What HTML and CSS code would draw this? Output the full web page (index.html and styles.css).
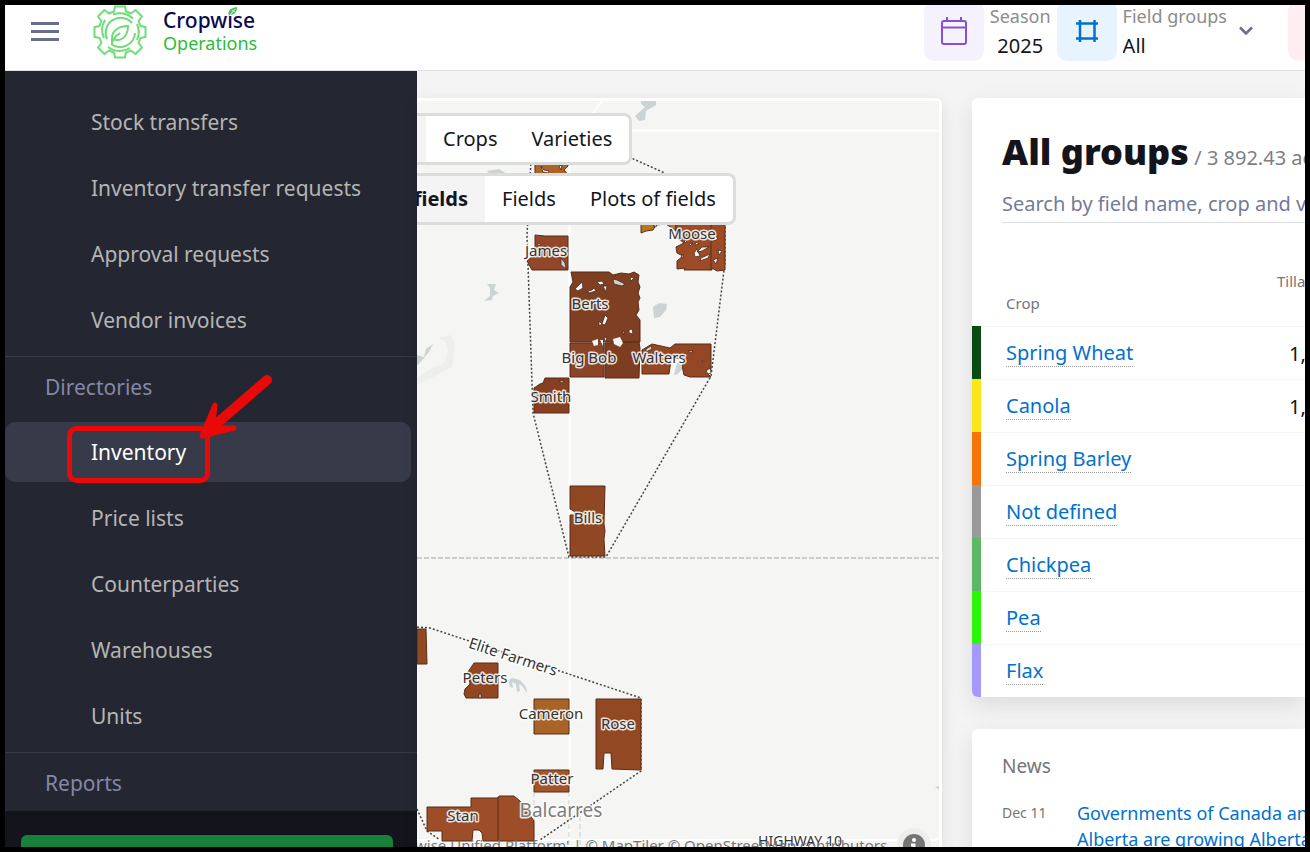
FILE: index.html
```html
<!DOCTYPE html>
<html lang="en">
<head>
    <meta charset="UTF-8">
    <meta name="viewport" content="width=device-width, initial-scale=1.0">
    <title>Cropwise Operations</title>
    <link rel="stylesheet" href="styles.css">
</head>
<body>
    <header class="topbar">
        <button class="burger" aria-label="Menu"><span></span><span></span><span></span></button>
        <a class="logo" href="#">
            <svg class="logo-mark" viewBox="0 0 54 54" fill="none" stroke="#6fdc78" stroke-width="2">
                <path d="M22 1.500h10l1 5 5 2 4.500-3.500 6.500 6.500-3.500 4.500 2 5 5 1v10l-5 1-2 5 3.500 4.500-6.500 6.500-4.500-3.500-5 2-1 5h-10l-1-5-5-2-4.500 3.500-6.500-6.500 3.500-4.500-2-5-5-1v-10l5-1 2-5-3.500-4.500 6.500-6.500 4.500 3.500 5-2z" stroke-linejoin="round"/>
                <path d="M20 9.500a19 19 0 0 1 20 4M44 19a19 19 0 0 1 0 16M37 43a19 19 0 0 1-22-1M11 33a19 19 0 0 1 1-18"/>
                <path d="M14 34a15 15 0 0 1 25-16M42 28a15 15 0 0 1-24 11"/>
                <path d="M19 39v-6c0-8 8-12 16-12 0 8-4 14-11 14l-4-1M19 39c0-6 5-9 8-11"/>
            </svg>
            <span class="logo-text">
                <span class="logo-name">Cropwise</span>
                <span class="logo-product">Operations</span>
                <svg class="logo-leaf" viewBox="0 0 10 9"><path d="M1 9C-1 2 4 1 9 0c0 5-3 9-7 7z" fill="#4cc35a"/><path d="M2 8l5-6M4 3l3 2" stroke="#fff" stroke-width=".7"/></svg>
            </span>
        </a>

        <div class="filters">
            <div class="filter">
                <span class="filter-icon purple">
                    <svg width="28" height="30" viewBox="0 0 28 30" fill="none" stroke="#8450d8" stroke-width="2"><rect x="2" y="5" width="24" height="23" rx="2"/><path d="M2 11.500h24M7 1v4M21 1v4"/></svg>
                </span>
                <div class="filter-body center">
                    <label for="season">Season</label>
                    <select id="season"><option>2025</option></select>
                </div>
            </div>
            <div class="filter">
                <span class="filter-icon blue">
                    <svg width="24" height="24" viewBox="0 0 24 24" fill="none" stroke="#0071cd" stroke-width="2.500"><path d="M5 1v22M19.500 1v22M1 4.500h22M1 19.500h22"/></svg>
                </span>
                <div class="filter-body">
                    <label for="group">Field groups</label>
                    <select id="group"><option>All</option></select>
                </div>
                <svg class="chevron" width="14" height="10" viewBox="0 0 14 10" fill="none" stroke="#696e8c" stroke-width="2.500"><path d="M1 1.500l6 6 6-6"/></svg>
            </div>
            <span class="filter-icon pink"></span>
        </div>
    </header>

    <div class="layout">
        <aside class="sidebar">
            <nav class="menu">
                <ul class="menu-list first">
                    <li><a href="#">Stock transfers</a></li>
                    <li><a href="#">Inventory transfer requests</a></li>
                    <li><a href="#">Approval requests</a></li>
                    <li><a href="#">Vendor invoices</a></li>
                </ul>
                <h2 class="menu-title">Directories</h2>
                <ul class="menu-list">
                    <li class="active">
                        <a href="#">Inventory</a>
                        <!-- pointer to the current step -->
                        <svg class="callout" width="280" height="114" viewBox="5 372 280 114" fill="none">
                            <rect x="69.500" y="428.500" width="138" height="52" rx="7" stroke="#ea0909" stroke-width="5"/>
                            <path d="M267 380L215 425" stroke="#ea0909" stroke-width="10" stroke-linecap="round"/>
                            <path d="M202 436L215 405L213 423L218 428L234 428z" fill="#ea0909" stroke="#ea0909" stroke-width="5" stroke-linejoin="round"/>
                        </svg>
                    </li>
                    <li><a href="#">Price lists</a></li>
                    <li><a href="#">Counterparties</a></li>
                    <li><a href="#">Warehouses</a></li>
                    <li><a href="#">Units</a></li>
                </ul>
                <h2 class="menu-title">Reports</h2>
            </nav>
            <div class="sidebar-footer">
                <button class="sidebar-btn" aria-label="Support"></button>
            </div>
        </aside>

        <main class="content">
            <section class="map">
                <svg class="map-canvas" viewBox="417 101 522 746" preserveAspectRatio="xMinYMin slice">
                    <!-- roads -->
                    <g fill="none" stroke="#fff" stroke-width="2">
                        <path d="M569.500 130V847M417 130.500H939M588 120L602 101"/>
                        <path d="M417 840H935l4-2"/>
                    </g>
                    <path d="M417 558H939" stroke="#ccc" stroke-width="2" stroke-dasharray="5 2"/>
                    <path d="M534 792v55M569 792v55M580 816v31" stroke="#ccc" stroke-dasharray="5 3" fill="none"/>

                    <!-- water -->
                    <g fill="#cbd3d4">
                        <path d="M641 101h15v4l-10 6-1 9-6 1-4-5 10-9-4-3z"/>
                        <path d="M487 171l12-2 8 5v3h-15z"/>
                        <path d="M487 284h9l-2 6 5 3-6 3-1 4-8 1 6-5v-8z"/>
                        <path d="M417 355l7 2 2-8 7-5-4 8-11 13-1-1z"/>
                        <path d="M653 307l6-4 8 1-1 6-6 7-6 1z"/>
                        <path d="M507 681l5-3 8 2 6 7 1 6-5-7-3-2 1 7-3 1-1-8-4-2 1 6-3-1-1-5z"/>
                        <path d="M935 787l4-1v4z"/>
                    </g>
                    <path d="M439 338l12-3 4 10-3 22-15 8-20 10v-7l15-10 12-5 4-12-3-10z" fill="#ecefed"/>

                    <!-- group outlines -->
                    <g fill="none" stroke="#444" stroke-width="1.500" stroke-dasharray="2 2">
                        <path d="M531 160L527 235L533 413L569 557H606L711 376L725 262V200L629 157"/>
                        <path d="M417 627L430 628L641 698V771L540 840M417 809L427 831L440 840"/>
                    </g>

                    <!-- fields -->
                    <g stroke="#592d18" stroke-width="1">
                        <path d="M535 160h33v6l-4 4 5 6h-34z" fill="#ab6427"/>
                        <path d="M641 222h35v9l-4-3-6-4-10 1-3 5-7 1-5 2z" fill="#b3771f"/>
                        <path d="M676 222h49v48l-8 1-5-3v2h-28l1-2-8 1v-8l6-5-6-3-1-6 8-4-8-6z" fill="#9d4b27"/>
                        <path d="M711 222v48" fill="none"/>
                        <path d="M535 235l10 1h23v34h-36l-5-9 8-7z" fill="#93472a"/>
                        <path d="M571 272h38l4 3 8-2 8 1 5-2 5 3-1 7 2 5-2 6 2 5-2 4 1 8-3 5 4 5V342H570v-55l3-5z" fill="#7f3f22"/>
                        <path d="M570 343h34v34h-34z" fill="#8b4426"/>
                        <path d="M605 343l34-1 1 6-1 30h-34z" fill="#7e3d20"/>
                        <path d="M642 350l10-6 18 4 5-4h36v25l-3 5 3 3h-21l-6-2-2-9 3-7-9-1-5 2-2 14h-27z" fill="#944724"/>
                        <path d="M534 388l6-4 3-1 2-5h24v35h-35z" fill="#873f21"/>
                        <path d="M570 486h35l-1 38 1 7-1 8 1 17h-35v-41h5l-1-4-4-2z" fill="#904724"/>
                        <path d="M417 629h9l1 35h-10z" fill="#934824"/>
                        <path d="M474 663h24v35h-32l-2-4 1-5 5-5-2-12z" fill="#924722"/>
                        <path d="M534 699h35v35h-35z" fill="#a86427"/>
                        <path d="M596 699h45v71l-29-1-1-16h-7l-1 16h-7z" fill="#934824"/>
                        <path d="M534 770h35v22h-35z" fill="#a25627"/>
                        <path d="M427 807h44v-9h27l1-2h15l6 5 14 20v20H483l-1-8-3-3h-6l-1 11h-30v-10h-15z" fill="#9d4d27"/>
                        <path d="M498 797v44" fill="none"/>
                    </g>

                    <!-- gaps inside the fields -->
                    <g fill="#f5f5f3" stroke="#4c2a1b" stroke-width=".800">
                        <path d="M541 166l3 4 5 1-1 2-5-1zM559 166l3-1-1 5z"/>
                        <path d="M575 289l7-7 1 6-5 3zM597 282l5-1 2 3-4 1zM588 291l4-1 2-2 2 3-7 2zM603 286h4l-1 6zM605 315l3 3-3 7-3-1zM599 321l3 3-3 2zM630 277l4 1-3 3zM604 337l3 1-2 4zM622 332l2-1v3zM629 330l3-1 1 5-4-1z"/>
                        <path d="M613 279l4 1 8 4-3 2-8-2z" fill="#cbd3d4"/>
                        <path d="M592 341l6-2v6l-4 1zM600 340h3v6zM613 339l7-2 3 6-3 4-6-3z" stroke="none"/>
                        <path d="M689 244l4-1-3 3zM696 242l3 2-4 1zM702 247h7l-7 4-5 1zM694 253l3-4 3 7-5 1zM701 258l9-4-2 4-8 3zM681 257l2-3v4zM714 236l4 2-3 3zM718 250l4 1-3 4zM713 260l5-2-2 6zM684 240l3 1-2 2zM653 226l4-2-1 3z"/>
                        <path d="M688 351h5l-2 2zM702 360l2 1-1 2zM706 371l4-3 1 5-3 1zM559 381h5l-2 2zM561 253l5-3-2 5zM538 243l3 2-3 1zM479 694h2v4h-2z"/>
                        <path d="M561 258l4 5 1 6-5-4zM646 349l5-3 1 3-6 3z" fill="#cbd3d4"/>
                    </g>
                    <path d="M677 363l4-2 1 8-4 5-4 1z" fill="#cbd3d4"/>

                    <g class="map-label" text-anchor="middle">
                        <text x="692" y="239">Moose</text>
                        <text x="546" y="256">James</text>
                        <text x="590" y="309">Berts</text>
                        <text x="589" y="363">Big Bob</text>
                        <text x="659" y="363">Walters</text>
                        <text x="551" y="402">Smith</text>
                        <text x="588" y="523">Bills</text>
                        <text x="485" y="683">Peters</text>
                        <text x="551" y="719">Cameron</text>
                        <text x="618" y="729">Rose</text>
                        <text x="552" y="784">Patter</text>
                        <text x="463" y="821">Stan</text>
                        <text x="513" y="662" transform="rotate(18 513 657)">Elite Farmers</text>
                        <text class="town" x="561" y="817">Balcarres</text>
                        <text class="road" x="800" y="846">HIGHWAY 10</text>
                    </g>
                    <text class="attribution" x="415" y="851">wise Unified Platform' | © MapTiler © OpenStreetMap contributors</text>
                    <circle cx="914" cy="845" r="17" fill="#ededeb"/>
                    <circle cx="914" cy="845" r="11" fill="#757575"/>
                    <path d="M911 845h3v5" stroke="#fff" stroke-width="3" fill="none"/>
                    <circle cx="914" cy="840" r="2" fill="#fff"/>
                </svg>

                <div class="map-tools">
                    <div class="segments">
                        <button class="segment active narrow" aria-label="Groups"></button>
                        <button class="segment">Crops</button>
                        <button class="segment">Varieties</button>
                    </div>
                    <div class="segments">
                        <button class="segment active wide">fields</button>
                        <button class="segment">Fields</button>
                        <button class="segment">Plots of fields</button>
                    </div>
                </div>
            </section>

            <div class="panel">
                <section class="card summary">
                    <div class="summary-head">
                        <h1>All groups <small>/ 3 892.43 ac</small></h1>
                        <input class="search" type="text" aria-label="Search" placeholder="Search by field name, crop and variety">
                    </div>
                    <table class="crops">
                        <thead>
                            <tr><th>Crop</th><th class="area">Tillable</th></tr>
                        </thead>
                        <tbody>
                            <tr class="wheat"><td><a href="#">Spring Wheat</a></td><td>1,</td></tr>
                            <tr class="canola"><td><a href="#">Canola</a></td><td>1,</td></tr>
                            <tr class="barley"><td><a href="#">Spring Barley</a></td><td></td></tr>
                            <tr class="undefined"><td><a href="#">Not defined</a></td><td></td></tr>
                            <tr class="chickpea"><td><a href="#">Chickpea</a></td><td></td></tr>
                            <tr class="pea"><td><a href="#">Pea</a></td><td></td></tr>
                            <tr class="flax"><td><a href="#">Flax</a></td><td></td></tr>
                        </tbody>
                    </table>
                </section>

                <section class="card news">
                    <h2>News</h2>
                    <div class="news-item">
                        <time>Dec 11</time>
                        <a href="#">Governments of Canada and<br>Alberta are growing Alberta's</a>
                    </div>
                </section>
            </div>
        </main>
    </div>
</body>
</html>
```
FILE: styles.css
```css
* {
    margin: 0;
    padding: 0;
    box-sizing: border-box;
}

body {
    height: 100vh;
    border: 5px solid #000;
    overflow: hidden;
    display: flex;
    flex-direction: column;
    font-family: "Noto Sans", sans-serif;
    font-size: 20px;
    color: #14151c;
    background: #f4f4f4;
}

a {
    color: #0071cd;
    text-decoration: none;
}

ul {
    list-style: none;
}

button,
select,
input {
    font: inherit;
    color: inherit;
    border: none;
    background: none;
}

button {
    cursor: pointer;
}

/* top bar */
.topbar {
    flex: none;
    display: flex;
    align-items: center;
    height: 66px;
    padding: 0 0 12px 26px;
    overflow: hidden;
    background: #fff;
    border-bottom: 1px solid #dfdfe6;
}

.burger {
    display: flex;
    flex-direction: column;
    gap: 5px;
    width: 28px;
}

.burger span {
    height: 3px;
    background: #696e8c;
}

.logo {
    display: flex;
    align-items: center;
    gap: 16px;
    margin-left: 34px;
}

.logo-mark {
    width: 54px;
    height: 54px;
}

.logo-text {
    position: relative;
    display: flex;
    flex-direction: column;
    line-height: 23px;
}

.logo-name {
    font-size: 21px;
    font-weight: 500;
    color: #0a0a50;
}

.logo-product {
    font-size: 18px;
    color: #2cbc38;
}

.logo-leaf {
    position: absolute;
    top: -2px;
    left: 65px;
    width: 10px;
    height: 9px;
}

.filters {
    display: flex;
    margin-left: auto;
    padding-bottom: 2px;
}

.filter {
    display: flex;
    align-items: center;
    gap: 6px;
    margin-right: 6px;
}

.filter-icon {
    flex: none;
    display: flex;
    align-items: center;
    justify-content: center;
    width: 60px;
    height: 60px;
    border-radius: 10px;
}

.purple {
    background: #f5f2fe;
}

.blue {
    background: #e7f4ff;
}

.pink {
    margin-left: 29px;
    margin-right: -43px;
    background: #ffeef1;
}

.filter-body {
    display: flex;
    flex-direction: column;
    line-height: 30px;
}

.filter-body label {
    font-size: 18px;
    color: #8c8c8c;
}

.filter-body select {
    appearance: none;
    height: 30px;
}

.center select {
    text-align-last: center;
}

.chevron {
    margin-left: 6px;
}

.layout {
    flex: 1;
    display: flex;
    min-height: 0;
}

/* sidebar */
.sidebar {
    flex: none;
    width: 412px;
    display: flex;
    flex-direction: column;
    background: #242631;
    font-size: 21px;
}

.menu {
    flex: 1;
    min-height: 0;
    overflow: hidden;
}

.menu-list {
    display: flex;
    flex-direction: column;
    gap: 6px;
    padding: 5px 6px 6px 0;
}

.menu-list.first {
    padding-top: 21px;
}

.menu-list li {
    position: relative;
}

.menu-list a {
    display: block;
    padding-left: 86px;
    line-height: 60px;
    border-radius: 10px;
    color: #b5b5b5;
}

.menu-list .active a {
    background: #373a48;
    color: #fff;
}

.menu-title {
    height: 61px;
    padding-left: 40px;
    border-top: 1px solid #373a48;
    font-size: 21px;
    font-weight: 400;
    line-height: 60px;
    color: #8488a6;
}

.callout {
    position: absolute;
    left: 0;
    top: -50px;
    pointer-events: none;
}

.sidebar-footer {
    flex: none;
    height: 36px;
    padding: 24px 24px 0 16px;
    overflow: hidden;
    background: #14151c;
}

.sidebar-btn {
    width: 100%;
    height: 48px;
    border-radius: 6px;
    background: #17803b;
}

/* content */
.content {
    flex: 1;
    display: flex;
    gap: 30px;
    min-width: 0;
    padding-top: 27px;
}

.map {
    flex: 1;
    position: relative;
    padding: 3px 3px 0 0;
    overflow: hidden;
    background: #fff;
    border-top-right-radius: 6px;
    box-shadow: 0 4px 16px rgba(0, 0, 0, .1);
}

.map-canvas {
    display: block;
    width: 100%;
    height: 100%;
    background: #f5f5f3;
}

.map-label {
    font-size: 15px;
    fill: #333;
    stroke: #fff;
    stroke-width: 3px;
    stroke-linejoin: round;
    stroke-opacity: .85;
    paint-order: stroke;
}

.map-label .town {
    font-size: 19px;
    fill: #7d7d7d;
}

.map-label .road {
    font-size: 14px;
}

.attribution {
    font-size: 15px;
    fill: #777;
}

.map-tools {
    position: absolute;
    top: 15px;
    left: 0;
    display: flex;
    flex-direction: column;
    align-items: flex-start;
    gap: 8px;
}

.segments {
    display: flex;
    height: 52px;
    border: 3px solid #dcdcda;
    border-left: none;
    border-radius: 0 8px 8px 0;
    overflow: hidden;
    background: #fff;
}

.segment {
    padding: 0 17px 2px;
}

.segment.active {
    display: flex;
    align-items: center;
    justify-content: flex-end;
    padding: 0 17px 2px 0;
    overflow: hidden;
    background: #f4f4f4;
    font-weight: 700;
}

.segment.narrow {
    width: 9px;
    padding: 0;
}

.segment.wide {
    width: 68px;
}

/* right panel */
.panel {
    flex: none;
    width: 333px;
    display: flex;
    flex-direction: column;
    gap: 32px;
    white-space: nowrap;
}

.card {
    background: #fff;
    border-radius: 6px 0 0 6px;
    box-shadow: 0 8px 24px rgba(0, 0, 0, .1);
}

.summary-head {
    padding: 28px 0 0 30px;
    overflow: hidden;
}

h1 {
    font-size: 36px;
    font-weight: 900;
    line-height: 52px;
}

h1 small {
    margin-left: -4px;
    font-size: 20px;
    font-weight: 400;
    color: #808080;
}

.search {
    display: block;
    width: 100%;
    height: 45px;
    padding-bottom: 6px;
    border-bottom: 1px solid #dcdfdf;
}

.search::placeholder {
    color: #757a99;
    opacity: 1;
}

.summary .search {
    height: 39px;
    padding-bottom: 0;
}

.crops {
    width: 100%;
    margin-top: 45px;
    table-layout: fixed;
    border-collapse: separate;
    border-spacing: 0;
}

.crops th {
    height: 58px;
    font-size: 15px;
    font-weight: 400;
    line-height: 22px;
    text-align: left;
    vertical-align: bottom;
    color: #757575;
    padding: 2px 0 12px;
}

.crops th:first-child {
    width: 305px;
    padding-left: 34px;
}

.crops th.area {
    vertical-align: top;
}

.crops td {
    height: 53px;
    padding-left: 12px;
    border-top: 1px solid #f4f4f4;
}

.crops td:first-child {
    padding-left: 25px;
    border-left: 9px solid;
    border-top: none;
    background: linear-gradient(#f4f4f4, #f4f4f4) top / 100% 1px no-repeat;
}

.crops a {
    border-bottom: 1px dotted #999;
}

.wheat td:first-child { border-left-color: #0a4a13; }
.canola td:first-child { border-left-color: #f9e71c; }
.barley td:first-child { border-left-color: #f57606; }
.undefined td:first-child { border-left-color: #9a9a9a; }
.chickpea td:first-child { border-left-color: #5cb866; }
.pea td:first-child { border-left-color: #2df50a; }
.flax td:first-child {
    border-left-color: #a598ff;
    border-bottom-left-radius: 6px;
}

.news {
    flex: 1;
    padding: 23px 0 0 30px;
}

.news h2 {
    font-size: 19px;
    font-weight: 400;
    line-height: 28px;
    color: #757575;
}

.news-item {
    display: flex;
    margin-top: 20px;
    font-size: 18px;
    line-height: 26px;
}

.news-item time {
    flex: none;
    width: 75px;
    font-size: 14px;
    color: #757575;
}
```
